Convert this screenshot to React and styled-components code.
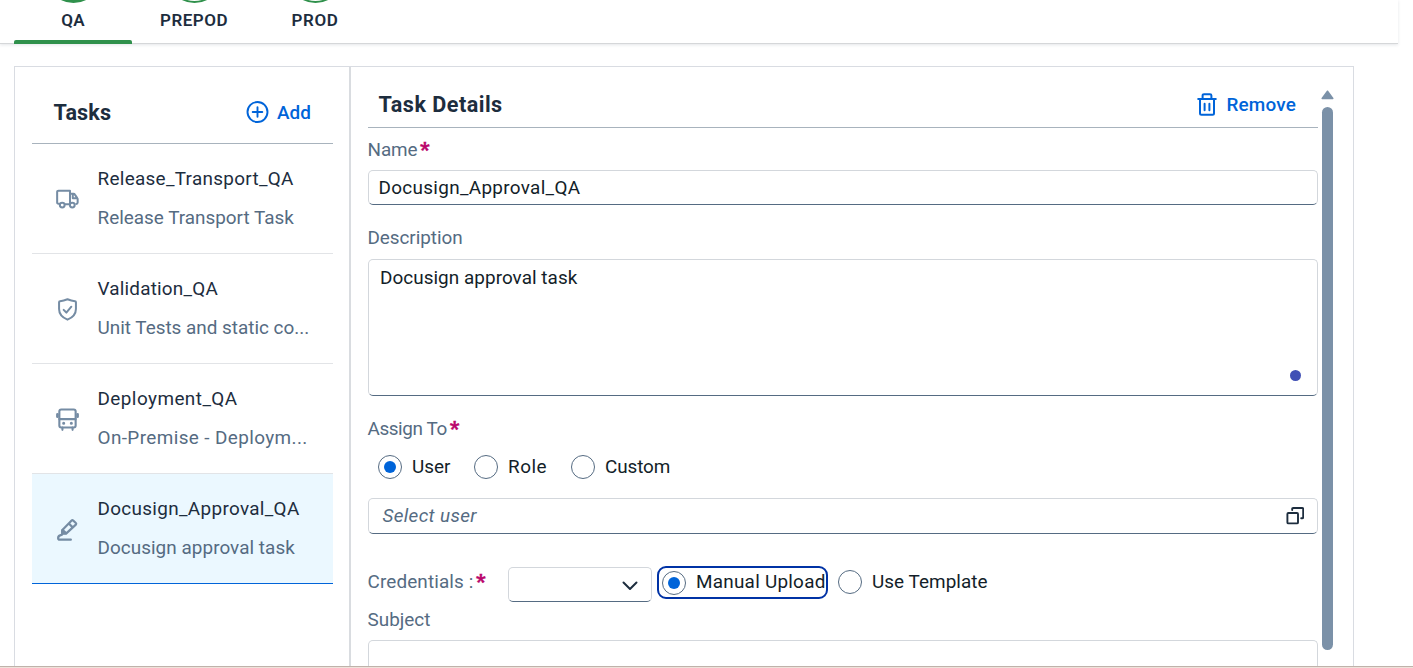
import React from "react";
import styled, { createGlobalStyle } from "styled-components";

const GlobalStyle = createGlobalStyle`
  * { box-sizing: border-box; }
  body { margin: 0; background: #fff; overflow: hidden; }
`;

const Page = styled.div`
  position: relative;
  display: flex;
  flex-direction: column;
  height: 668px;
  overflow: hidden;
  font-family: Roboto, "Liberation Sans", sans-serif;
  font-size: 18.9px;
  color: #1d2d3e;
`;

const TabBar = styled.nav`
  display: flex;
  flex: none;
  width: 1398px;
  height: 44px;
  padding-left: 14px;
  border-bottom: 1px solid #d5d7d9;
  box-shadow: 0 1px 3px rgba(34, 53, 72, 0.12);
`;

const Tab = styled.div`
  display: flex;
  flex-direction: column;
  align-items: center;
  width: ${(p) => p.$width}px;
  height: 44px;
`;

const StageCircle = styled.div`
  flex: none;
  width: 55px;
  height: 55px;
  margin-top: -52px;
  border: 2px solid #30914c;
  border-radius: 50%;
  background: ${(p) => (p.$filled ? "#30914c" : "#fff")};
`;

const TabLabel = styled.span`
  margin-top: 6px;
  height: 22px;
  line-height: 22px;
  font-size: 17px;
  font-weight: 600;
  white-space: nowrap;
  letter-spacing: ${(p) => p.$spacing || 0}px;
`;

const TabMarker = styled.div`
  width: 118px;
  height: 4px;
  margin-top: 9px;
  border-radius: 2px 2px 0 0;
  background: #30914c;
`;

const Panel = styled.main`
  display: flex;
  flex: 1;
  width: 1340px;
  margin: 22px 0 0 14px;
  border: 1px solid #d9dce2;
  border-bottom: 0;
`;

const TaskColumn = styled.aside`
  width: 336px;
  padding: 0 16px 0 17px;
  border-right: 2px solid #d9dce0;
`;

const Title = styled.h2`
  margin: 0;
  font-size: 21.6px;
  font-weight: 700;
  line-height: 26px;
  letter-spacing: ${(p) => p.$spacing || 0}px;
`;

const TaskHeader = styled.header`
  display: flex;
  align-items: center;
  justify-content: space-between;
  height: 77px;
  padding: 15px 22px 0 21.5px;
  border-bottom: 1px solid #a8b3bd;
`;

const ActionButton = styled.button`
  display: flex;
  align-items: center;
  gap: ${(p) => p.$gap}px;
  padding: 0;
  border: 0;
  background: none;
  color: #0064d9;
  font: 500 18.9px/26px Roboto, sans-serif;
  letter-spacing: ${(p) => p.$spacing || 0}px;
`;

const TaskItem = styled.div`
  display: flex;
  height: 110px;
  border-bottom: 1px solid ${(p) => (p.$selected ? "#0064d9" : "#e2e4e7")};
  background: ${(p) => (p.$selected ? "#ebf8ff" : "#fff")};
`;

const TaskIcon = styled.div`
  display: flex;
  width: 65.5px;
  padding: 44px 0 0 24px;
  color: #758ca4;
`;

const TaskText = styled.div`
  padding-top: 22px;
`;

const TaskName = styled.div`
  height: 26px;
  line-height: 26px;
  white-space: nowrap;
  letter-spacing: ${(p) => p.$spacing || 0}px;
`;

const TaskNote = styled(TaskName)`
  margin-top: 13px;
  color: #556b82;
`;

const Details = styled.section`
  width: 950px;
  margin-left: 17px;
`;

const DetailsHeader = styled.header`
  display: flex;
  align-items: center;
  justify-content: space-between;
  height: 61px;
  padding: 15px 22px 0 10.5px;
  border-bottom: 1px solid #a8b3bd;
`;

const Label = styled.div`
  display: flex;
  height: 26px;
  line-height: 26px;
  margin-top: ${(p) => p.$top || 0}px;
  margin-bottom: ${(p) => p.$bottom || 0}px;
  margin-left: -0.5px;
  color: #556b82;
  white-space: nowrap;
  letter-spacing: ${(p) => p.$spacing || 0}px;
`;

const Required = styled.span`
  margin-left: ${(p) => p.$gap || 2.5}px;
  color: #ba066c;
  font-size: 20.5px;
  font-weight: 900;
  -webkit-text-stroke: 0.4px #ba066c;
`;

const Field = styled.div`
  display: flex;
  align-items: ${(p) => (p.$tall ? "flex-start" : "center")};
  justify-content: space-between;
  height: ${(p) => p.$height}px;
  width: ${(p) => (p.$width ? p.$width + "px" : "auto")};
  padding: ${(p) => p.$pad};
  border: 1px solid #d3d7dc;
  border-bottom-color: #556b82;
  border-radius: 5px;
  line-height: 26px;
  background: #fff;
  letter-spacing: ${(p) => p.$spacing || 0}px;
  color: #131e29;
`;

const Placeholder = styled.span`
  color: #556b82;
  font-style: italic;
`;

const ResizeDot = styled.span`
  align-self: flex-end;
  width: 11px;
  height: 11px;
  border-radius: 50%;
  background: #4050b5;
`;

const RadioGroup = styled.div`
  display: flex;
  gap: 23px;
  height: 24px;
  margin: 0 0 19px 10px;
`;

const RadioOption = styled.div`
  display: flex;
  align-items: center;
  gap: 10px;
  white-space: nowrap;
  width: ${(p) => (p.$width ? p.$width + "px" : "auto")};
  letter-spacing: ${(p) => p.$spacing || 0}px;
  color: #131e29;
`;

const RadioText = styled.span`
  padding-bottom: 2px;
`;

const FocusedOption = styled(RadioOption)`
  width: 171px;
  height: 33px;
  margin-left: 5px;
  padding-left: 3px;
  border: 2px solid #0032a5;
  border-radius: 9px;
`;

const RadioDot = styled.span`
  display: flex;
  flex: none;
  align-items: center;
  justify-content: center;
  width: 24px;
  height: 24px;
  border: 1px solid #556b82;
  border-radius: 50%;
  &::after {
    content: "";
    width: 12px;
    height: 12px;
    border-radius: 50%;
    background: ${(p) => (p.$checked ? "#0064d9" : "transparent")};
  }
`;

const CredentialRow = styled.div`
  display: flex;
  align-items: flex-start;
  height: 36px;
  margin: 32px 0 5px;
`;

const CredentialLabel = styled(Label)`
  width: 140.5px;
  margin-top: 3px;
`;

const SelectWrap = styled.div`
  padding-top: 1px;
`;

const TemplateOption = styled(RadioOption)`
  height: 32px;
  margin-left: 10px;
`;

const ScrollTrack = styled.div`
  display: flex;
  flex-direction: column;
  align-items: center;
  width: 13px;
  margin: 23px 0 0 3px;
`;

const ScrollThumb = styled.div`
  width: 11px;
  height: 543px;
  margin-top: 7px;
  border-radius: 6px;
  background: #7b91a8;
`;

const BottomEdge = styled.div`
  position: absolute;
  left: 0;
  right: 0;
  bottom: 0;
  height: 2px;
  border-top: 1px solid #bfb2aa;
  background: #eee2da;
`;

const line = { fill: "none", stroke: "currentColor", strokeLinecap: "round", strokeLinejoin: "round" };

const AddIcon = () => (
  <svg width="23" height="23" viewBox="0 0 23 23" {...line} strokeWidth="1.9">
    <circle cx="11.5" cy="11" r="10" />
    <path d="M11.5 6.2v9.6M6.7 11h9.6" />
  </svg>
);

const TrashIcon = () => (
  <svg width="20" height="23" viewBox="0 0 20 23" {...line} strokeWidth="2">
    <path d="M1.2 6h17.6M3 6v14.3q0 1.5 1.5 1.5h11q1.5 0 1.5-1.5V6M5.6 6V2.6q0-1.4 1.4-1.4h6q1.4 0 1.4 1.4V6M7.6 10.7v6.6M12.4 10.7v6.6" />
  </svg>
);

const TruckIcon = () => (
  <svg width="23" height="23" viewBox="0 0 24 24" {...line} strokeWidth="2.1">
    <path d="M3.2 16.4h-.6Q1.200 16.400 1.200 15V4.200q0-1.400 1.400-1.400h12V16.200M9.500 16.900h4.200M14.600 6.100h3.600q1 0 1.500.8l2.500 3.700q.4.400.4 1v3.600q0 1.400-1.500 1.400M17.500 6.300v4.300h4.600" />
    <circle cx="6.500" cy="17.800" r="2.500" />
    <circle cx="17" cy="17.800" r="2.500" />
  </svg>
);

const ShieldIcon = () => (
  <svg width="23" height="23" viewBox="0 0 24 24" {...line} strokeWidth="2.1">
    <path d="M12 1.300Q8 3 4.200 3.300q-1 .1-1 1.100v7c0 5.600 3.700 9 8.800 11.200 5.100-2.200 8.800-5.600 8.800-11.200V4.400q0-1-1-1.100Q16 3 12 1.300zM8 12.400l2.800 2.800 5.200-6.100" />
  </svg>
);

const BusIcon = () => (
  <svg width="23" height="23" viewBox="0 0 24 24" {...line} strokeWidth="2.2">
    <rect x="3.500" y="1.500" width="17" height="18.800" rx="2" />
    <path d="M3.500 11.600h17M6.700 20.500v2.300M17.300 20.500v2.300" />
    <path d="M1.500 6.500v2.600M22.500 6.500v2.600" strokeWidth="2.8" />
    <path d="M8 16h.01M16 16h.01" strokeWidth="3.2" />
  </svg>
);

const SignIcon = () => (
  <svg width="23" height="23" viewBox="0 0 24 24" {...line} strokeWidth="2.3">
    <path d="M6.400 16.300v-3.600L16.300 2.600q.8-.8 1.600 0l2.800 2.700q.8.800 0 1.600L10.500 16.300zM13.400 5.800l4 4" />
    <path d="M7 12.500v3.300h3.500z" fill="currentColor" />
    <path d="M6.300 17.400Q2.200 18.300 2.200 20.800q0 1.800 1.600 1.800H15.500" />
  </svg>
);

const ValueHelpIcon = () => (
  <svg width="18" height="18" viewBox="0 0 18 18" {...line} strokeWidth="1.9" color="#1d2d3e">
    <rect x="1.400" y="6" width="10.600" height="10.400" rx="1" />
    <path d="M6.200 3V2q0-1 1-1h9q1 0 1 1v8.300q0 1-1 1h-1" />
  </svg>
);

const ChevronIcon = () => (
  <svg width="16" height="10" viewBox="0 0 16 10" {...line} strokeWidth="2" color="#1d2d3e">
    <path d="M1.500 1.500L8 8l6.500-6.500" />
  </svg>
);

const ScrollArrow = () => (
  <svg width="13" height="10" viewBox="0 0 13 10">
    <path d="M6.500 1.200L11.800 8.500H1.200z" fill="#7b91a8" stroke="#7b91a8" strokeWidth="1.5" strokeLinejoin="round" />
  </svg>
);

const tasks = [
  { name: "Release_Transport_QA", note: "Release Transport Task", Icon: TruckIcon, s: 0.3, n: 0 },
  { name: "Validation_QA", note: "Unit Tests and static co...", Icon: ShieldIcon, s: 0.2, n: 0 },
  { name: "Deployment_QA", note: "On-Premise - Deploym...", Icon: BusIcon, s: 0.45, n: 0.4 },
  { name: "Docusign_Approval_QA", note: "Docusign approval task", Icon: SignIcon, s: 0.33, n: 0.05, selected: true },
];

export default function App() {
  return (
    <Page>
      <GlobalStyle />
      <TabBar>
        <Tab $width={118}>
          <StageCircle $filled />
          <TabLabel $spacing={0.2}>QA</TabLabel>
          <TabMarker />
        </Tab>
        <Tab $width={124}>
          <StageCircle />
          <TabLabel $spacing={0.5}>PREPOD</TabLabel>
        </Tab>
        <Tab $width={118}>
          <StageCircle />
          <TabLabel $spacing={0.6}>PROD</TabLabel>
        </Tab>
      </TabBar>
      <Panel>
        <TaskColumn>
          <TaskHeader>
            <Title $spacing={0.1}>Tasks</Title>
            <ActionButton $gap={8} $spacing={0.1}>
              <AddIcon />
              Add
            </ActionButton>
          </TaskHeader>
          {tasks.map(({ name, note, Icon, s, n, selected }) => (
            <TaskItem key={name} $selected={selected}>
              <TaskIcon>
                <Icon />
              </TaskIcon>
              <TaskText>
                <TaskName $spacing={s}>{name}</TaskName>
                <TaskNote $spacing={n}>{note}</TaskNote>
              </TaskText>
            </TaskItem>
          ))}
        </TaskColumn>
        <Details>
          <DetailsHeader>
            <Title $spacing={0.48}>Task Details</Title>
            <ActionButton $gap={9} $spacing={0.2}>
              <TrashIcon />
              Remove
            </ActionButton>
          </DetailsHeader>
          <Label $top={9} $bottom={7} $spacing={-0.1}>
            Name<Required>*</Required>
          </Label>
          <Field $height={35} $pad="0 10px 0 9.5px" $spacing={0.32}>Docusign_Approval_QA</Field>
          <Label $top={20} $bottom={8} $spacing={-0.05}>Description</Label>
          <Field $height={137} $pad="5px 16px 14px 11px" $tall $spacing={0.05}>
            Docusign approval task
            <ResizeDot />
          </Field>
          <Label $top={20} $bottom={13} $spacing={-0.4}>
            Assign To<Required $gap={3}>*</Required>
          </Label>
          <RadioGroup>
            <RadioOption $width={73}><RadioDot $checked /><RadioText>User</RadioText></RadioOption>
            <RadioOption $width={74} $spacing={0.5}><RadioDot /><RadioText>Role</RadioText></RadioOption>
            <RadioOption $spacing={-0.1}><RadioDot /><RadioText>Custom</RadioText></RadioOption>
          </RadioGroup>
          <Field $height={36} $pad="0 13px 0 13.5px" $spacing={0.35}>
            <Placeholder>Select user</Placeholder>
            <ValueHelpIcon />
          </Field>
          <CredentialRow>
            <CredentialLabel $spacing={0.13}>
              Credentials :<Required>*</Required>
            </CredentialLabel>
            <SelectWrap>
              <Field $height={35} $width={144} $pad="2px 13px 0 0">
                <span />
                <ChevronIcon />
              </Field>
            </SelectWrap>
            <FocusedOption $spacing={0.25}><RadioDot $checked /><RadioText>Manual Upload</RadioText></FocusedOption>
            <TemplateOption $spacing={0.06}><RadioDot /><RadioText>Use Template</RadioText></TemplateOption>
          </CredentialRow>
          <Label $bottom={7}>Subject</Label>
          <Field $height={36} $pad="0" />
        </Details>
        <ScrollTrack>
          <ScrollArrow />
          <ScrollThumb />
        </ScrollTrack>
      </Panel>
      <BottomEdge />
    </Page>
  );
}
